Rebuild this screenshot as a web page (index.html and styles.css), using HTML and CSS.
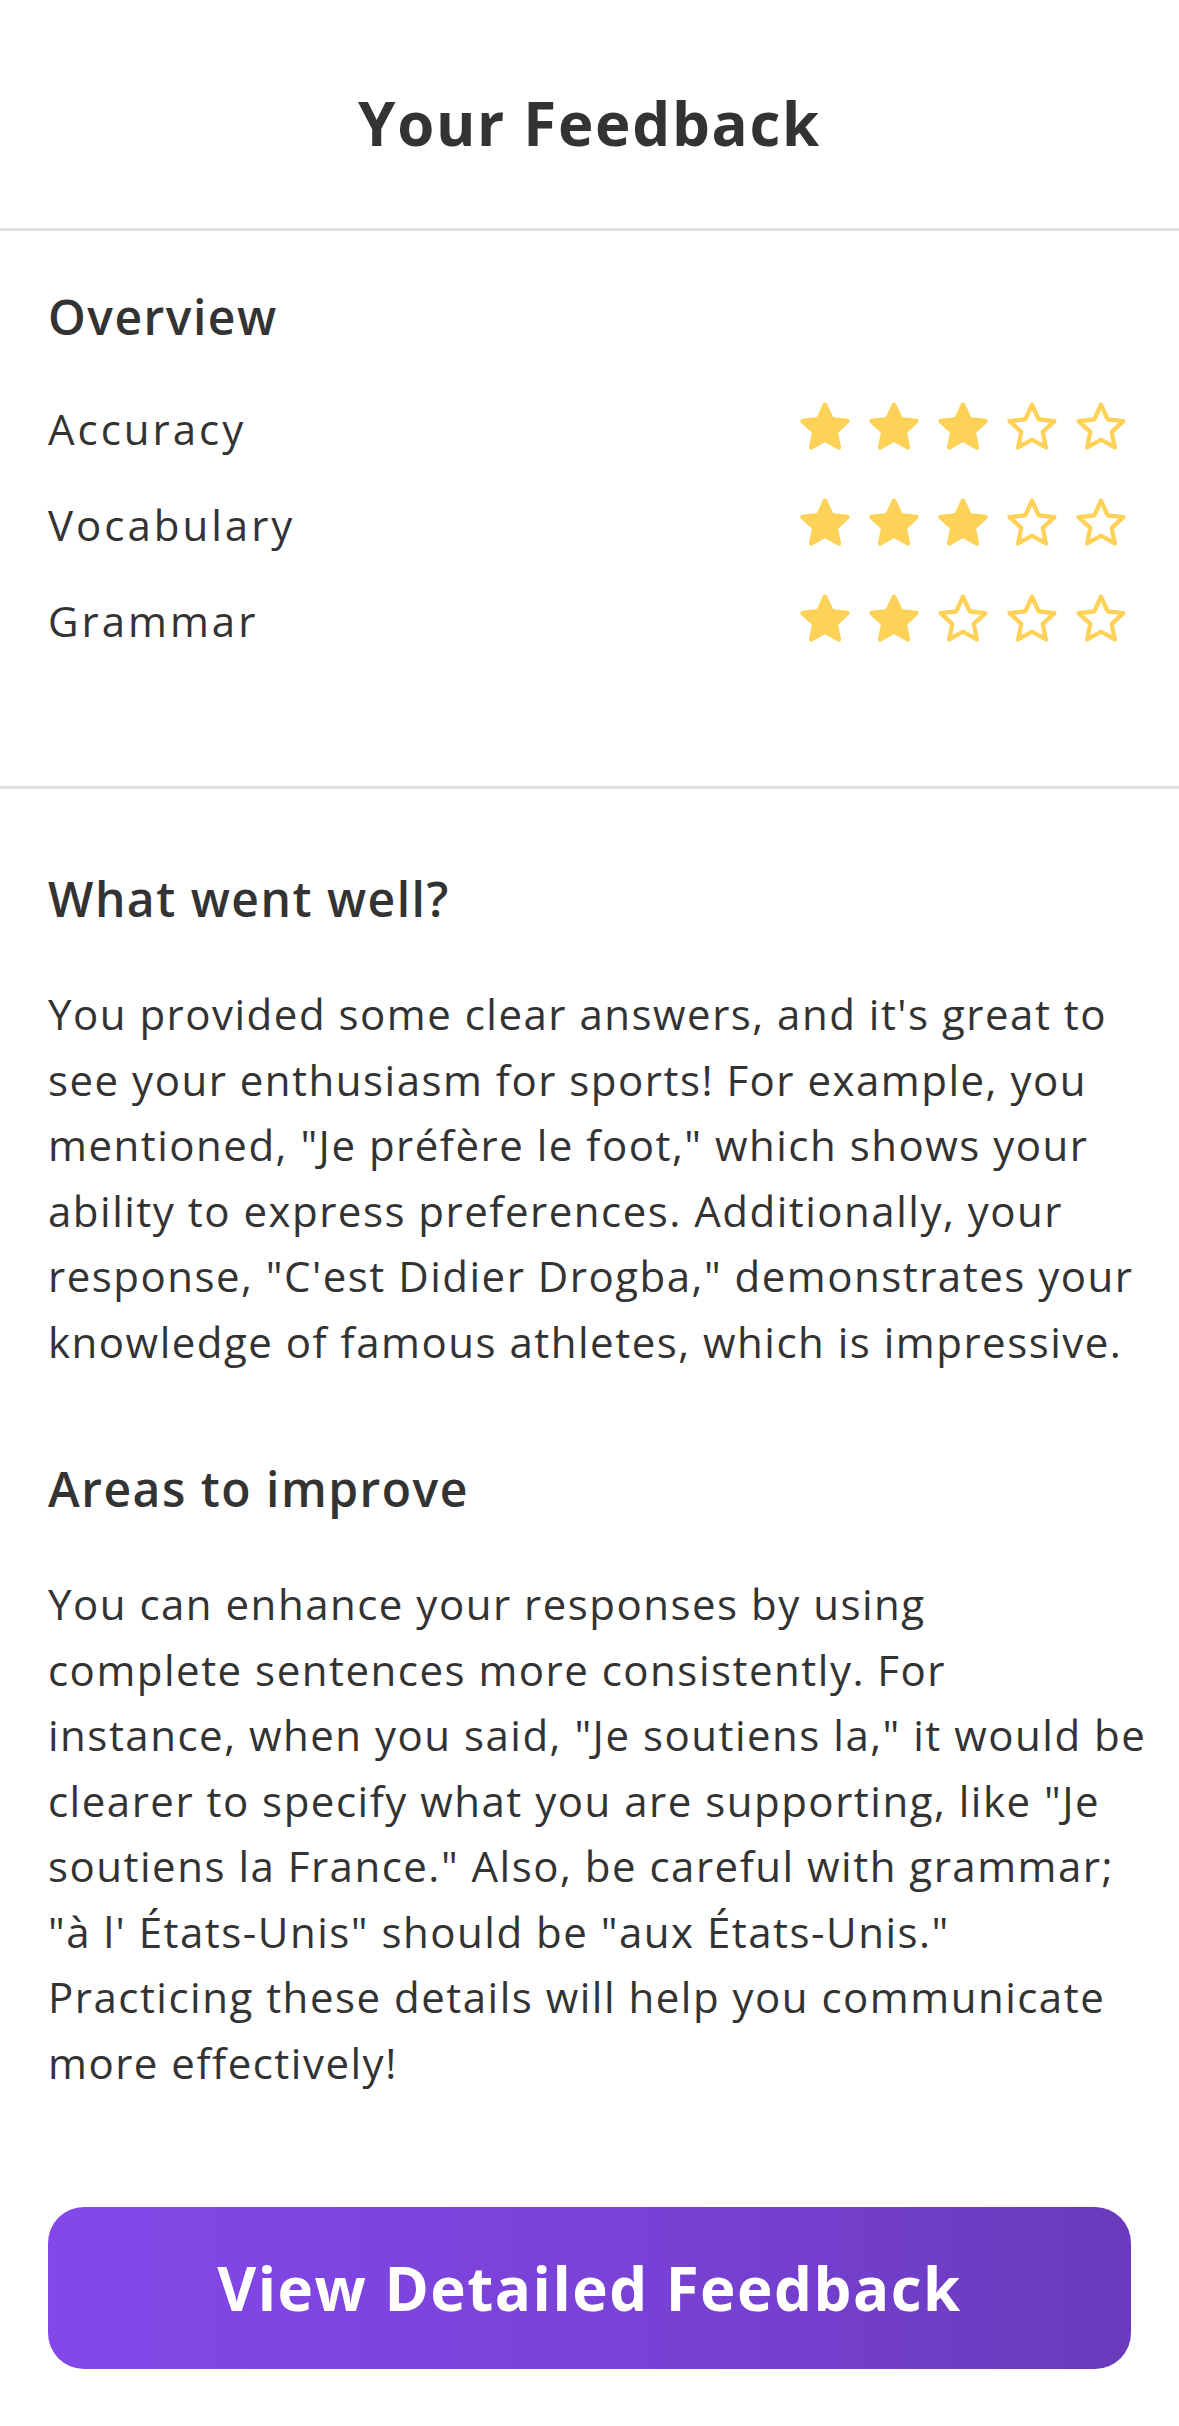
FILE: index.html
```html
<!DOCTYPE html>
<html lang="en">
<head>
<meta charset="utf-8">
<title>Your Feedback</title>
<link rel="stylesheet" href="styles.css">
</head>
<body>
<svg width="0" height="0" class="defs" aria-hidden="true">
  <defs>
    <polygon id="star-shape" points="12,2.1 14.94,8.56 21.99,9.36 16.76,14.15 18.17,21.09 12,17.6 5.83,21.09 7.24,14.15 2.01,9.36 9.06,8.56"/>
  </defs>
</svg>
<div class="page">
  <header class="header">
    <h1 class="title">Your Feedback</h1>
  </header>

  <section class="overview">
    <h2 class="overview-title">Overview</h2>
    <div class="rating-row">
      <span class="rating-label">Accuracy</span>
      <div class="stars">
        <svg class="star full" viewBox="0 0 24 24"><use href="#star-shape"/></svg>
        <svg class="star full" viewBox="0 0 24 24"><use href="#star-shape"/></svg>
        <svg class="star full" viewBox="0 0 24 24"><use href="#star-shape"/></svg>
        <svg class="star empty" viewBox="0 0 24 24"><use href="#star-shape"/></svg>
        <svg class="star empty" viewBox="0 0 24 24"><use href="#star-shape"/></svg>
      </div>
    </div>
    <div class="rating-row">
      <span class="rating-label">Vocabulary</span>
      <div class="stars">
        <svg class="star full" viewBox="0 0 24 24"><use href="#star-shape"/></svg>
        <svg class="star full" viewBox="0 0 24 24"><use href="#star-shape"/></svg>
        <svg class="star full" viewBox="0 0 24 24"><use href="#star-shape"/></svg>
        <svg class="star empty" viewBox="0 0 24 24"><use href="#star-shape"/></svg>
        <svg class="star empty" viewBox="0 0 24 24"><use href="#star-shape"/></svg>
      </div>
    </div>
    <div class="rating-row">
      <span class="rating-label">Grammar</span>
      <div class="stars">
        <svg class="star full" viewBox="0 0 24 24"><use href="#star-shape"/></svg>
        <svg class="star full" viewBox="0 0 24 24"><use href="#star-shape"/></svg>
        <svg class="star empty" viewBox="0 0 24 24"><use href="#star-shape"/></svg>
        <svg class="star empty" viewBox="0 0 24 24"><use href="#star-shape"/></svg>
        <svg class="star empty" viewBox="0 0 24 24"><use href="#star-shape"/></svg>
      </div>
    </div>
  </section>

  <section class="details">
    <h2 class="section-title">What went well?</h2>
    <p class="section-text">You provided some clear answers, and it's great to<br>
see your enthusiasm for sports! For example, you<br>
mentioned, "Je préfère le foot," which shows your<br>
ability to express preferences. Additionally, your<br>
response, "C'est Didier Drogba," demonstrates your<br>
knowledge of famous athletes, which is impressive.</p>

    <h2 class="section-title section-title-next">Areas to improve</h2>
    <p class="section-text">You can enhance your responses by using<br>
complete sentences more consistently. For<br>
instance, when you said, "Je soutiens la," it would be<br>
clearer to specify what you are supporting, like "Je<br>
soutiens la France." Also, be careful with grammar;<br>
"à l' États-Unis" should be "aux États-Unis."<br>
Practicing these details will help you communicate<br>
more effectively!</p>

    <button class="cta" type="button">View Detailed Feedback</button>
  </section>
</div>
</body>
</html>
```

FILE: styles.css
```css
* {
  box-sizing: border-box;
}

html, body {
  margin: 0;
  padding: 0;
  background: #ffffff;
}

body {
  font-family: "Open Sans", "Noto Sans", "Liberation Sans", sans-serif;
  color: #333333;
}

.defs {
  position: absolute;
  width: 0;
  height: 0;
  overflow: hidden;
}

.page {
  width: 1179px;
}

.header {
  height: 231px;
  padding-top: 81px;
  border-bottom: 3px solid #dedfe3;
  text-align: center;
}

.title {
  margin: 0;
  font-size: 60px;
  line-height: 84px;
  font-weight: 700;
  letter-spacing: 1.7px;
}

.overview {
  padding: 53px 48px 0 48px;
  height: 558px;
  border-bottom: 3px solid #dedfe3;
}

.overview-title {
  margin: 0 0 31px 0;
  font-size: 48px;
  line-height: 66px;
  font-weight: 600;
  letter-spacing: 1.5px;
}

.rating-row {
  display: flex;
  align-items: center;
  justify-content: space-between;
  height: 96px;
}

.rating-label {
  font-size: 42px;
  line-height: 66px;
  font-weight: 400;
  letter-spacing: 3px;
}

.stars {
  display: flex;
  gap: 15px;
  margin-right: 3px;
  margin-top: -5px;
}

.star {
  width: 54px;
  height: 54px;
  display: block;
}

.star.full {
  fill: #fdd257;
  stroke: #fdd257;
  stroke-width: 2;
  stroke-linejoin: round;
}

.star.empty {
  fill: none;
  stroke: #fdd257;
  stroke-width: 1.9;
  stroke-linejoin: round;
}

.details {
  padding: 77px 48px 0 48px;
}

.section-title {
  margin: 0;
  font-size: 48px;
  line-height: 66px;
  font-weight: 600;
  letter-spacing: 1.5px;
}

.section-title-next {
  margin-top: 82px;
}

.section-text {
  margin: 49px 0 0 0;
  font-size: 42px;
  line-height: 65.5px;
  font-weight: 400;
  letter-spacing: 1.5px;
  white-space: nowrap;
}

.cta {
  display: flex;
  align-items: center;
  justify-content: center;
  width: 100%;
  height: 162px;
  margin-top: 112px;
  border: none;
  border-radius: 36px;
  background: linear-gradient(90deg, #8447e9 0%, #7a42d8 50%, #6a3abc 100%);
  color: #ffffff;
  font-family: "Open Sans", "Noto Sans", "Liberation Sans", sans-serif;
  font-size: 60px;
  font-weight: 700;
  letter-spacing: 1.5px;
  padding: 0;
}
```
